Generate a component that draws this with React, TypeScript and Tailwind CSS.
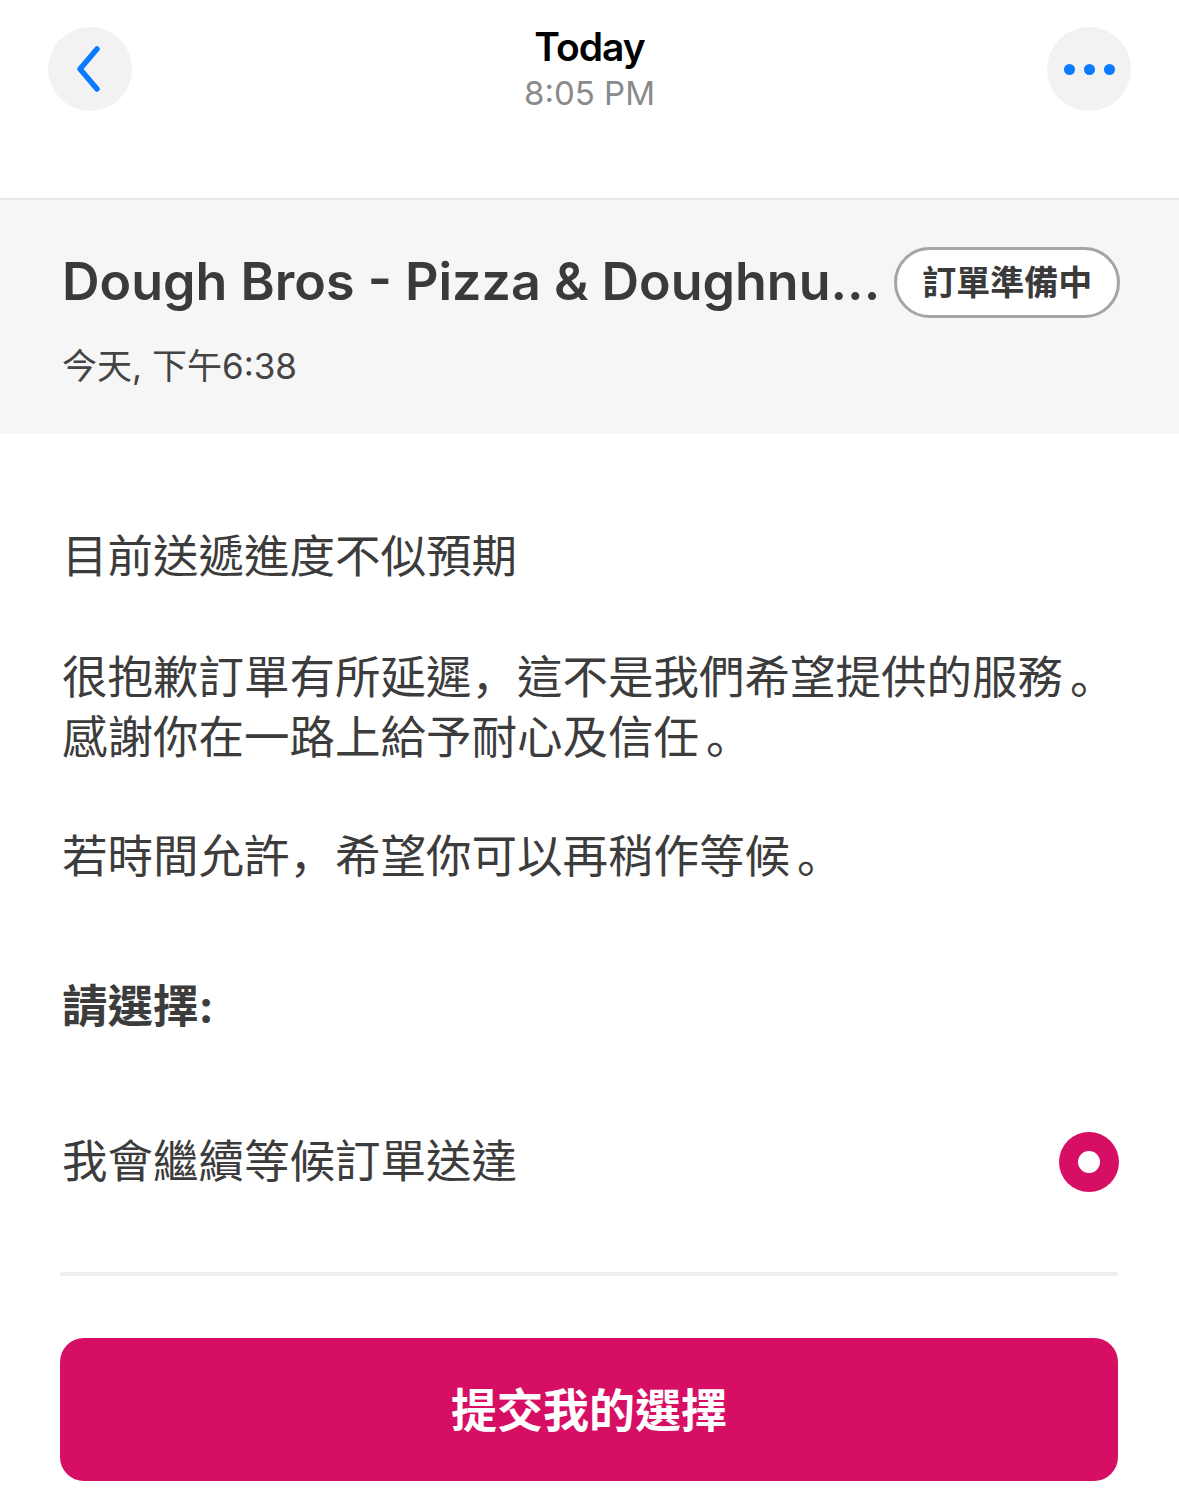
import React from 'react';

const font = '"Inter", "Noto Sans CJK TC", "Noto Sans", sans-serif';

// punctuation sits low in the cell in the reference, like the SC forms
function P({ c }: { c: string }) {
	return (
		<span className={`font-['Noto_Sans_CJK_SC',sans-serif] leading-[0px] ${c === '。' ? 'pl-[7px]' : ''}`}>
			{c}
		</span>
	);
}

function TopBar() {
	return (
		<div className="flex items-start justify-between px-[48px] pt-[27px] h-[198px] bg-white">
			<button className="w-[84px] h-[84px] rounded-full bg-[#f2f2f2] flex items-center justify-center">
				<svg width="40" height="50" viewBox="0 0 40 50" fill="none">
					<path d="M27 5 L10 25 L27 45" stroke="#0a7aff" strokeWidth="5.5" strokeLinecap="round" strokeLinejoin="round" />
				</svg>
			</button>
			<div className="flex flex-col items-center -mt-[2px]">
				<div className="text-[39px] leading-[44px] font-semibold text-black tracking-tight">Today</div>
				<div className="text-[33px] leading-[44px] text-[#8a8a8a] mt-[2px]">8:05 PM</div>
			</div>
			<button className="w-[84px] h-[84px] rounded-full bg-[#f2f2f2] flex items-center justify-center gap-[9px]">
				<span className="w-[11px] h-[11px] rounded-full bg-[#0a7aff]" />
				<span className="w-[11px] h-[11px] rounded-full bg-[#0a7aff]" />
				<span className="w-[11px] h-[11px] rounded-full bg-[#0a7aff]" />
			</button>
		</div>
	);
}

function OrderHeader() {
	return (
		<div className="bg-[#f6f6f6] border-t-2 border-[#e8e8e8] h-[236px] px-[62px] pt-[46px]">
			<div className="flex items-center justify-between gap-[14px]">
				<h1 className="text-[52px] leading-[72px] font-semibold text-[#3a3a3a] whitespace-nowrap">
					Dough Bros - Pizza &amp; Doughnu...
				</h1>
				<span className="shrink-0 -mr-[1px] h-[71px] px-[25px] flex items-center rounded-full border-[3px] border-[#a5a5a5] bg-white text-[34px] font-bold text-[#3a3a3a]">
					訂單準備中
				</span>
			</div>
			<div className="mt-[24px] text-[35px] leading-[48px] text-[#444]">今天, 下午6:38</div>
		</div>
	);
}

export default function App() {
	return (
		<div className="w-[1179px] min-h-[1510px] bg-white" style={{ fontFamily: font }}>
			<TopBar />
			<OrderHeader />
			<div className="px-[62px] pt-[93px] text-[#3c3c3c] text-[45.5px] leading-[60px]">
				<p className="whitespace-nowrap">目前送遞進度不似預期</p>
				<p className="mt-[61px] whitespace-nowrap">
					很抱歉訂單有所延遲<P c="，" />這不是我們希望提供的服務<P c="。" />
					<br />
					感謝你在一路上給予耐心及信任<P c="。" />
				</p>
				<p className="mt-[59px] whitespace-nowrap">
					若時間允許<P c="，" />希望你可以再稍作等候<P c="。" />
				</p>
				<p className="mt-[90px] font-bold">請選擇:</p>
				<div className="mt-[95px] flex items-center justify-between">
					<span>我會繼續等候訂單送達</span>
					<span className="w-[60px] h-[60px] -mr-[2px] rounded-full bg-[#d70f64] flex items-center justify-center">
						<span className="w-[22px] h-[22px] rounded-full bg-white" />
					</span>
				</div>
				<div className="mt-[80px] h-[4px] bg-[#efefef] -ml-[2px] -mr-[1px]" />
				<button className="mt-[62px] -ml-[2px] w-[1058px] h-[143px] rounded-[24px] bg-[#d70f64] text-white text-[46px] font-bold flex items-center justify-center">
					提交我的選擇
				</button>
			</div>
		</div>
	);
}
